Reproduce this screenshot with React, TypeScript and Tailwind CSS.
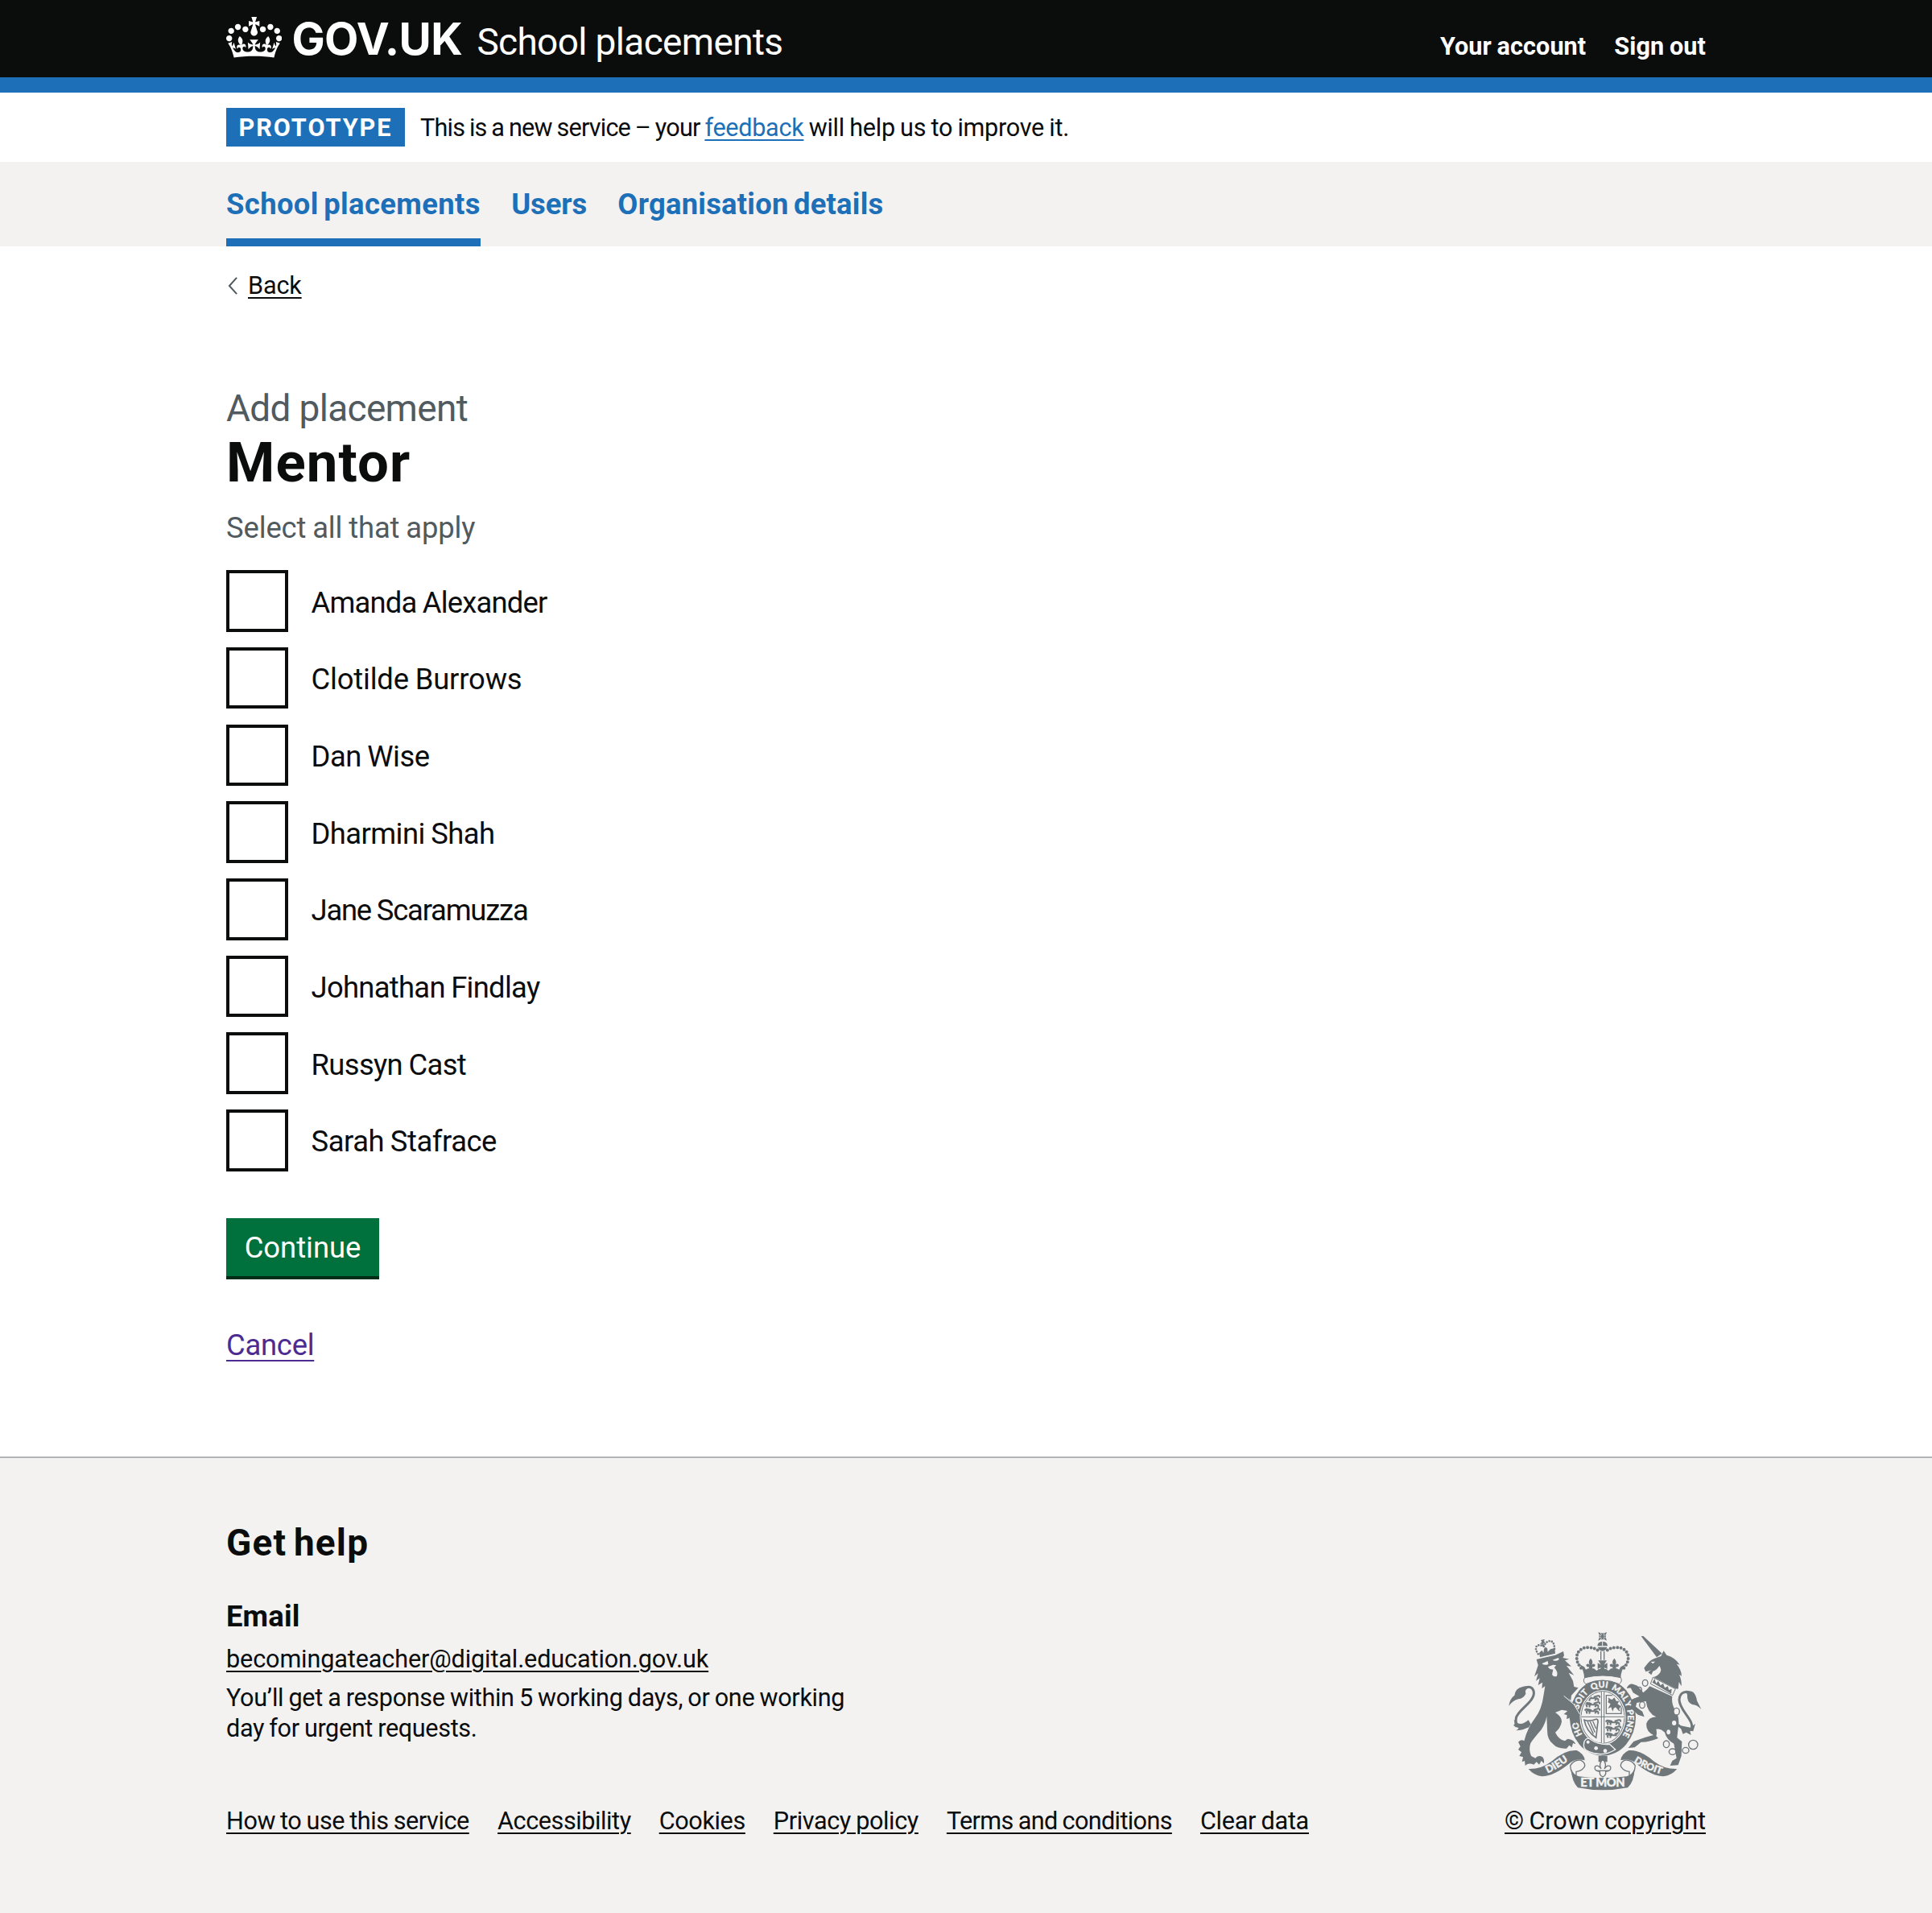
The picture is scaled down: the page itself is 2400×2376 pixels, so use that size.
import type { ReactNode } from "react";

const mentors = [
  { name: "Amanda Alexander", tracking: "tracking-[-0.8px]" },
  { name: "Clotilde Burrows", tracking: "tracking-[-0.17px]" },
  { name: "Dan Wise", tracking: "tracking-[-0.5px]" },
  { name: "Dharmini Shah", tracking: "tracking-[-0.57px]" },
  { name: "Jane Scaramuzza", tracking: "tracking-[-1.2px]" },
  { name: "Johnathan Findlay", tracking: "tracking-[-0.7px]" },
  { name: "Russyn Cast", tracking: "tracking-[-0.63px]" },
  { name: "Sarah Stafrace", tracking: "tracking-[-0.44px]" },
];

const footerLinks = [
  { label: "How to use this service", tracking: "w-[302px] tracking-[-0.44px]" },
  { label: "Accessibility", tracking: "w-[165.5px] tracking-[-0.43px]" },
  { label: "Cookies", tracking: "w-[107px] tracking-[-0.37px]" },
  { label: "Privacy policy", tracking: "w-[180px] tracking-[-0.38px]" },
  { label: "Terms and conditions", tracking: "w-[280px] tracking-[-0.63px]" },
  { label: "Clear data", tracking: "w-[135px] tracking-[-0.27px]" },
];

function Container({ children, className = "" }: { children: ReactNode; className?: string }) {
  return <div className={`mx-auto w-[1838px] ${className}`}>{children}</div>;
}

function CrownLogo() {
  return (
    <svg viewBox="0 0 132 97" className="mt-[20.5px] h-[51px] w-[69.4px] shrink-0 self-start" fill="#fff">
      <path d="M25 30.2c3.5 1.5 7.7-.2 9.1-3.7 1.5-3.6-.2-7.8-3.9-9.2-3.6-1.4-7.6.3-9.1 3.9-1.4 3.5.3 7.5 3.9 9zM9 39.5c3.6 1.5 7.8-.2 9.2-3.7 1.5-3.6-.2-7.8-3.9-9.1-3.6-1.5-7.6.2-9.1 3.8-1.4 3.5.3 7.5 3.8 9zM4.4 57.2c3.5 1.5 7.7-.2 9.1-3.8 1.5-3.6-.2-7.7-3.9-9.1-3.5-1.5-7.6.3-9.1 3.8-1.4 3.5.3 7.6 3.9 9.1zm38.3-21.4c3.5 1.5 7.7-.2 9.1-3.8 1.5-3.6-.2-7.7-3.9-9.1-3.6-1.5-7.6.3-9.1 3.8-1.3 3.6.4 7.7 3.9 9.1zm64.4-5.6c-3.6 1.5-7.8-.2-9.1-3.7-1.5-3.6.2-7.8 3.8-9.2 3.6-1.4 7.7.3 9.2 3.9 1.3 3.5-.4 7.5-3.9 9zm15.9 9.3c-3.6 1.5-7.7-.2-9.1-3.7-1.5-3.6.2-7.8 3.7-9.1 3.6-1.5 7.7.2 9.2 3.8 1.5 3.5-.3 7.5-3.8 9zm4.7 17.7c-3.6 1.5-7.8-.2-9.2-3.8-1.5-3.6.2-7.7 3.9-9.1 3.6-1.5 7.7.3 9.2 3.8 1.3 3.5-.4 7.6-3.9 9.1zM89.3 35.8c-3.6 1.5-7.8-.2-9.2-3.8-1.4-3.6.2-7.7 3.9-9.1 3.6-1.5 7.7.3 9.2 3.8 1.4 3.6-.3 7.7-3.9 9.1zM69.7 17.7l8.9 4.7V9.3l-8.9 2.8c-.2-.3-.5-.6-.9-.9L72.4 0H59.6l3.5 11.2c-.3.3-.6.5-.9.9l-8.8-2.8v13.1l8.8-4.7c.3.3.6.7.9.9l-5 15.4v.1c-.2.8-.4 1.6-.4 2.4 0 4.1 3.1 7.5 7 8.1h.2c.3 0 .7.1 1 .1.4 0 .7 0 1-.1h.2c4-.6 7.1-4.1 7.1-8.1 0-.8-.1-1.7-.4-2.4V34l-5.1-15.4c.4-.2.7-.6 1-.9zM66 92.8c16.9 0 32.8 1.1 47.1 3.2 4-16.9 8.9-26.7 14-33.5l-9.6-3.4c1 4.9 1.1 7.2 0 10.2-1.5-1.4-3-4.3-4.2-8.7L108.6 76c2.8-2 5-3.2 7.5-3.3-4.4 9.4-10 11.9-13.6 11.2-4.3-.8-6.3-4.6-5.6-7.9 1-4.7 5.7-5.9 8-.5 4.3-8.7-3-11.4-7.6-8.8 7.1-7.2 7.9-13.5 2.1-21.1-8 6.1-8.1 12.3-4.5 20.8-4.7-5.4-12.1-2.5-9.5 6.2 3.4-5.2 7.9-2 7.2 3.1-.6 4.3-6.4 7.8-13.5 7.2-10.3-.9-10.9-8-11.2-13.8 2.5-.5 7.1 1.8 11 7.3L80.2 60c-4.1 4.4-8 5.3-12.3 5.4 1.4-4.4 8-11.6 8-11.6H55.5s6.4 7.2 7.9 11.6c-4.2-.1-8-1-12.3-5.4l1.4 16.4c3.9-5.5 8.5-7.7 10.9-7.3-.3 5.8-.9 12.8-11.1 13.8-7.2.6-12.9-2.9-13.5-7.2-.7-5 3.8-8.3 7.1-3.1 2.7-8.7-4.6-11.6-9.4-6.2 3.7-8.5 3.6-14.7-4.6-20.8-5.8 7.6-5 13.9 2.2 21.1-4.7-2.6-11.9.1-7.7 8.8 2.3-5.5 7.1-4.2 8.1.5.7 3.3-1.3 7.1-5.7 7.9-3.5.7-9-1.8-13.5-11.2 2.5.1 4.7 1.3 7.5 3.3l-4.7-15.4c-1.2 4.4-2.7 7.2-4.3 8.7-1.1-3-.9-5.3 0-10.2l-9.5 3.4c5 6.9 9.9 16.7 14 33.5 14.8-2.1 30.8-3.2 47.7-3.2z" />
    </svg>
  );
}

const INK = "#6f777b";
const PAPER = "#f3f2f1";

/* Three walking lions, stacked, for one quarter of the shield. */
function Lions({ x, y }: { x: number; y: number }) {
  return (
    <g transform={`translate(${x} ${y})`} fill="none" stroke={INK} strokeWidth="6" strokeLinejoin="round">
      {[0, 24, 48].map((dy) => (
        <path
          key={dy}
          d={`M0 ${dy + 7}q6-9 12-4l-6 8 3 7m3-9h32l-6 9m6-9q10 3 5 11m-30-11-2 10m16-15 16-4q8-2 6 7m-42-5 12 4`}
        />
      ))}
    </g>
  );
}

function CrownFleur({ x, y }: { x: number; y: number }) {
  return (
    <path
      transform={`translate(${x} ${y})`}
      d="M0-24q11 12 4 24 9-8 13 1 0 9-10 7L4 22h-8L-7 8q-10 2-10-7 4-9 13-1-7-12 4-24Z"
      fill={INK}
    />
  );
}

function RoyalArms() {
  return (
    <svg viewBox="90 70 740 610" className="h-[203.3px] w-[246.7px]" fill={INK}>
      {/* Lion: tail, body, legs */}
      <path d="M178 432C150 445 124 436 130 402C136 372 200 342 196 306C192 284 172 282 158 296" fill="none" stroke={INK} strokeWidth="9" />
      <path d="M103 358Q106 330 124 318Q128 292 152 287Q172 280 178 290Q160 296 166 312Q158 330 138 332Q116 338 103 358Z" />
      <path d="M122 408Q128 432 118 428Q128 440 140 438Q136 448 130 449Q160 450 186 428L176 410Q150 432 134 420Z" />
      <path d="M206 184L232 178L276 168L306 154L309 170L304 178L328 183L312 188L336 210L318 208L346 243L326 234L342 264L346 286L362 290L336 318L334 336L306 318L345 356L366 388L368 420L356 408L354 426L342 410L336 420L330 402L318 406L320 392L308 388L322 376L300 372L276 382Q300 396 300 416Q296 440 276 456Q288 482 312 488L322 480Q346 482 352 500L342 496L338 512L328 504L318 516Q284 518 268 500Q246 484 246 448L244 396Q240 420 224 446Q196 478 184 496Q176 520 186 544L202 552Q210 540 226 546Q236 552 234 572L224 562L216 576L206 566L196 576Q176 568 164 580L162 562L152 566L156 548L142 544L150 530L138 520L146 508L138 492Q150 480 160 488Q172 440 200 404Q226 370 232 320L238 284L226 292L228 270L212 280L218 254L204 264L212 236L198 248L212 206Z" />
      <path d="M226 200L248 190L250 202Q238 208 226 200ZM266 186L288 178L290 184Q280 194 266 186ZM248 212L268 204L280 206L272 214Q288 232 282 246Q270 252 264 240L268 222L256 220Z" fill={PAPER} />
      <path d="M216 160L226 150L232 160L234 144L240 138L246 143L248 156L258 146L274 142L276 162L219 176Z" />
      <path d="M212 164C192 134 212 124 234 136C242 110 274 104 273 146" fill="none" stroke={INK} strokeWidth="8" strokeLinecap="round" strokeDasharray="0 10" />
      <path d="M222 112L236 109L234 117L240 122L232 124L235 136L228 137L227 126L219 127L226 119Z" />

      {/* Unicorn: horn, head, body, tail */}
      <path d="M596 98L604 97L674 162L654 176Z" />
      <path d="M655 177L670 172L680 152L691 168Q722 176 740 204L728 201Q746 222 747 246L738 240Q748 262 746 284L737 268L734 294L724 293L642 250Q658 246 666 234Q674 222 664 208Q652 226 640 228L634 242L622 232L634 224L613 230L607 216L618 202Q630 184 655 177Z" />
      <path d="M632 193L648 192L640 200Z" fill={PAPER} />
      <path d="M640 251L724 294L713 318L631 275Z" fill={PAPER} stroke={INK} strokeWidth="3" />
      <path d="M638 270L646 256L652 274L660 264L668 281L678 274L684 290L696 284L699 298L710 294L708 312Z" />
      <path d="M628 284L712 322Q708 348 722 372Q738 392 736 424L730 476L748 490L746 544L734 578L704 580L712 562L728 552L718 498Q690 482 684 456Q668 440 652 444Q656 458 652 470L660 478Q620 494 596 492L572 512L548 514L568 490L612 474L642 466Q612 452 616 422Q624 400 652 398Q620 386 614 340L578 346L574 366L600 378L608 398L590 392L556 366L558 334L594 322L568 306L560 290L542 292Q550 272 566 276L582 282L604 308Q620 296 628 284Z" />
      <path d="M734 428Q756 452 782 446C800 414 738 376 738 334C740 306 764 298 782 314" fill="none" stroke={INK} strokeWidth="9" />
      <path d="M762 300Q784 302 790 306Q802 318 804 338L820 370Q804 352 786 352Q766 344 768 316ZM740 430L780 438L798 424L790 452L778 450L782 466L764 456L752 462Z" />
      <g fill="none" stroke={INK} strokeWidth="4">
        <ellipse cx="611" cy="272" rx="10" ry="12" />
        <ellipse cx="589" cy="298" rx="9" ry="11" />
        <ellipse cx="728" cy="378" rx="11" ry="13" fill={PAPER} />
        <ellipse cx="690" cy="500" rx="11" ry="13" />
        <ellipse cx="713" cy="528" rx="13" ry="11" />
        <ellipse cx="762" cy="523" rx="12" ry="11" />
        <circle cx="790" cy="502" r="17" />
      </g>
      <ellipse cx="719" cy="421" rx="8" ry="9" fill={PAPER} />
      <ellipse cx="698" cy="455" rx="7" ry="9" fill={PAPER} />

      {/* Crown above the shield */}
      <path d="M436 83Q452 90 468 83Q461 98 468 114Q452 106 436 114Q443 98 436 83Z" />
      <path d="M444 82L448 94M460 82L456 94M444 115L448 103M460 115L456 103M435 91L447 96M435 105L447 100M469 91L457 96M469 105L457 100" stroke={PAPER} strokeWidth="2" />
      <path d="M433 134Q434 118 452 117Q470 118 471 134ZM435 138H469Q466 152 452 153Q438 152 435 138Z" />
      <path d="M452 117V134" stroke={PAPER} strokeWidth="3" />
      <path d="M446 154V186M458 154V186" stroke={INK} strokeWidth="4" />
      <path d="M372 216C340 178 360 138 398 140Q420 140 434 150" fill="none" stroke={INK} strokeWidth="12" strokeLinecap="round" strokeDasharray="0 13" />
      <path d="M532 216C564 178 544 138 506 140Q484 140 470 150" fill="none" stroke={INK} strokeWidth="12" strokeLinecap="round" strokeDasharray="0 13" />
      <path d="M366 202L384 212L390 222L398 218H420L430 226L438 220H466L474 226L484 218H506L514 222L520 212L538 202Q520 226 520 254Q452 238 384 254Q384 226 366 202Z" />
      <CrownFleur x={408} y={204} />
      <CrownFleur x={496} y={204} />
      <path d="M436 188H468L458 204L470 197V220L458 214L464 228H440L446 214L434 220V197L446 204Z" />

      {/* Garter and shield */}
      <ellipse cx="453" cy="400" rx="126" ry="146" fill={PAPER} />
      <ellipse cx="453" cy="400" rx="123" ry="143" />
      <path d="M386 252Q452 236 520 252Q528 266 514 276Q452 248 390 276Q376 266 386 252Z" fill={PAPER} stroke={INK} strokeWidth="3" />
      <ellipse cx="453" cy="400" rx="86" ry="102" fill={PAPER} />
      <ellipse cx="453" cy="400" rx="81" ry="97" fill="none" stroke={INK} strokeWidth="3" />
      <clipPath id="shield">
        <ellipse cx="453" cy="400" rx="77" ry="93" />
      </clipPath>
      <g clipPath="url(#shield)">
        <Lions x={386} y={320} />
        <Lions x={464} y={410} />
        <path d="M466 318H522V386H466ZM474 328L516 376" fill="none" stroke={INK} strokeWidth="4" />
        <path d="M476 330L488 334L496 326L504 340L516 338L508 350L520 358L512 374L504 360L494 366L490 378L484 362L472 368L482 350L472 344Z" />
        <path d="M384 410Q402 418 430 406Q438 410 434 424L428 476Q392 452 384 410Z" fill="none" stroke={INK} strokeWidth="5" />
        <path d="M396 416L418 462M406 416L424 456M416 414L428 442" stroke={INK} strokeWidth="4" />
      </g>
      <path d="M453 304V496M373 398H533" stroke={PAPER} strokeWidth="12" />
      <path d="M448 304V496M458 304V496M373 398H533" stroke={INK} strokeWidth="3" />
      <path id="garter" d="M453 511A93 111 0 0 1 453 289A93 111 0 0 1 453 511" fill="none" />
      <g fill={PAPER} stroke={PAPER} strokeWidth="1" fontFamily="Lato, 'Liberation Sans', sans-serif" fontWeight="900" fontSize="32">
        <text><textPath href="#garter" startOffset="93">HO</textPath></text>
        <text><textPath href="#garter" startOffset="190">SOIT</textPath></text>
        <text><textPath href="#garter" startOffset="279">QUI</textPath></text>
        <text><textPath href="#garter" startOffset="352">MAL</textPath></text>
        <text><textPath href="#garter" startOffset="424">Y</textPath></text>
        <text><textPath href="#garter" startOffset="453">PENSE</textPath></text>
      </g>
      <path d="M384 490Q396 470 410 484Q440 504 478 500L500 520Q452 550 402 528Q376 520 384 490Z" stroke={PAPER} strokeWidth="4" />
      <circle cx="398" cy="492" r="6" fill={PAPER} />
      <circle cx="428" cy="515" r="7" fill={PAPER} />
      <circle cx="462" cy="525" r="7" fill={PAPER} />

      {/* Forepaws laid over the garter */}
      <path d="M300 306L345 350L366 386L368 420L356 408L352 426L342 410L334 418L326 396Z" />
      <path d="M308 320L346 352L367 388" fill="none" stroke={PAPER} strokeWidth="3" />
      <path d="M552 280L578 286L600 312L618 330L580 344L576 360L600 378L606 396L584 390L558 366L560 334L590 322L566 308Z" />
      <ellipse cx="600" cy="354" rx="10" ry="12" fill={PAPER} stroke={INK} strokeWidth="4" />

      {/* Ribbon with the motto */}
      <path d="M437 544H470V566H437Z" />
      <path d="M453 556Q470 574 459 592Q470 574 482 584Q486 600 464 602Q466 616 453 622Q440 616 442 602Q420 600 424 584Q436 574 447 592Q436 574 453 556Z" fill={PAPER} stroke={INK} strokeWidth="4" />
      <path d="M430 599H476" stroke={INK} strokeWidth="4" />
      <path d="M176 592Q222 594 262 564Q312 520 356 523Q384 536 386 560Q350 552 326 574Q268 620 226 620Q196 616 176 592Z" />
      <path d="M730 592Q684 594 644 564Q594 520 550 523Q522 536 520 560Q556 552 580 574Q638 620 680 620Q710 616 730 592Z" />
      <path d="M332 580Q346 556 372 560Q392 572 384 586Q372 602 354 602V624Q334 610 332 580Z" fill={PAPER} stroke={INK} strokeWidth="4" />
      <path d="M574 580Q560 556 534 560Q514 572 522 586Q534 602 552 602V624Q572 610 574 580Z" fill={PAPER} stroke={INK} strokeWidth="4" />
      <path d="M334 590Q344 616 364 620Q452 632 542 620Q562 616 572 590Q570 640 546 662Q452 680 360 662Q338 640 334 590Z" />
      <g fill={PAPER} stroke={PAPER} strokeWidth="1.2" fontFamily="Lato, 'Liberation Sans', sans-serif" fontWeight="900" textAnchor="middle">
        <path id="dieu" d="M232 614Q272 602 338 552" fill="none" stroke="none" />
        <path id="droit" d="M554 556Q600 592 690 618" fill="none" stroke="none" />
        <text fontSize="38"><textPath href="#dieu" startOffset="50%">DIEU</textPath></text>
        <text fontSize="36"><textPath href="#droit" startOffset="49%">DROIT</textPath></text>
        <text x="453" y="659" fontSize="44" textLength="166">ET MON</text>
      </g>
    </svg>
  );
}

export default function App() {
  return (
    <div className="min-h-[2376px] bg-white font-[Roboto,'Liberation_Sans',sans-serif] text-[30.6px] leading-[38px] text-[#0b0c0c] [word-spacing:-1px]">
      <header className="h-[115px] border-b-[19px] border-[#1d70b8] bg-[#0b0c0c] text-white">
        <Container className="flex items-baseline whitespace-nowrap">
          <CrownLogo />
          <span className="ml-[12px] mt-[20px] w-[230px] font-[Inter,sans-serif] text-[55px] font-bold leading-[56px] tracking-[-0.6px]">
            GOV.UK
          </span>
          <span className="mt-[27px] text-[45.94px] leading-[50px] tracking-[-0.63px] [word-spacing:0px]">
            School placements
          </span>
          <nav className="ml-auto flex gap-[35px] font-bold">
            <a className="tracking-[0.08px]">Your account</a>
            <a className="tracking-[0.1px]">Sign out</a>
          </nav>
        </Container>
      </header>

      <Container className="flex h-[86px] items-center">
        <strong className="flex h-[48px] w-[222px] items-center justify-center bg-[#1d70b8] pt-[2px] tracking-[2px] text-white">
          PROTOTYPE
        </strong>
        <p className="ml-[19px] whitespace-nowrap pt-[2px] tracking-[-0.8px]">
          This is a new service – your{" "}
          <a className="tracking-[-0.29px] text-[#1d70b8] underline decoration-2 underline-offset-[4px]">feedback</a>
          <span className="tracking-[-0.28px]"> will help us to improve it.</span>
        </p>
      </Container>

      <nav className="bg-[#f3f2f1]">
        <Container className="flex h-[105px] gap-[38.3px] whitespace-nowrap text-[36.4px] font-bold leading-[48px] text-[#1d70b8] [word-spacing:-3px]">
          <a className="border-b-[10px] border-[#1d70b8] pt-[29px] tracking-[0.39px]">School placements</a>
          <a className="pt-[29px] tracking-[-0.1px]">Users</a>
          <a className="pt-[29px] tracking-[0.24px]">Organisation details</a>
        </Container>
      </nav>

      <main className="h-[1503px]">
        <Container>
          <a className="flex items-center pt-[30px]">
            <svg viewBox="0 0 14 24" className="ml-[2px] h-[22px] w-[13px]" fill="none" stroke="#505a5f" strokeWidth="2.2">
              <path d="M12 1L2 12l10 11" />
            </svg>
            <span className="ml-[12px] tracking-[-0.15px] underline decoration-2 underline-offset-[4px]">Back</span>
          </a>

          <h1>
            <span className="mt-[108px] block text-[45.94px] leading-[50px] tracking-[-0.66px] text-[#505a5f] [word-spacing:0px]">
              Add placement
            </span>
            <span className="block pt-[7px] text-[68.9px] font-bold leading-[72px] tracking-[1.1px]">Mentor</span>
          </h1>
          <p className="mt-[21px] text-[36.4px] leading-[48px] tracking-[-0.12px] text-[#505a5f]">
            Select all that apply
          </p>

          <div className="mt-[28.3px] flex flex-col gap-[19.2px]">
            {mentors.map(({ name, tracking }) => (
              <label key={name} className="flex h-[76.5px] items-center text-[36.4px] leading-[48px]">
                <span className="size-[76.5px] border-4 border-[#0b0c0c]" />
                <span className={`ml-[29px] pt-[4px] ${tracking}`}>{name}</span>
              </label>
            ))}
          </div>

          <button className="mt-[58px] flex h-[72.5px] w-[190px] items-center justify-center bg-[#00703c] pt-[3px] text-[36.4px] leading-[44px] text-white shadow-[0_4px_0_#002d18]">
            Continue
          </button>
          <a className="mt-[61.5px] block text-[36.4px] leading-[48px] tracking-[-0.25px] text-[#4c2c92] underline decoration-2 underline-offset-[6px]">
            Cancel
          </a>
        </Container>
      </main>

      <footer className="h-[567px] border-t-2 border-[#b1b4b6] bg-[#f3f2f1]">
        <Container className="flex justify-between whitespace-nowrap">
          <div>
            <h2 className="mt-[80px] text-[45.94px] font-bold leading-[50px] tracking-[1.2px] [word-spacing:-4px]">Get help</h2>
            <h3 className="mt-[43px] text-[36.4px] font-bold leading-[48px] tracking-[0.15px]">Email</h3>
            <a className="mt-[10px] block w-fit tracking-[-0.12px] underline decoration-2 underline-offset-[4px]">
              becomingateacher@digital.education.gov.uk
            </a>
            <p className="mt-[9.5px] leading-[38.3px]">
              <span className="block tracking-[-0.33px]">You’ll get a response within 5 working days, or one working</span>
              <span className="block tracking-[-0.36px]">day for urgent requests.</span>
            </p>
            <ul className="mt-[76.5px] flex gap-[35.1px]">
              {footerLinks.map(({ label, tracking }) => (
                <li key={label} className={`underline decoration-2 underline-offset-[4px] ${tracking}`}>
                  {label}
                </li>
              ))}
            </ul>
          </div>
          <div className="flex flex-col items-center">
            <div className="mr-[2px] mt-[211.5px]">
              <RoyalArms />
            </div>
            <a className="mt-[16.8px] tracking-[-0.08px] underline decoration-2 underline-offset-[4px]">© Crown copyright</a>
          </div>
        </Container>
      </footer>
    </div>
  );
}
